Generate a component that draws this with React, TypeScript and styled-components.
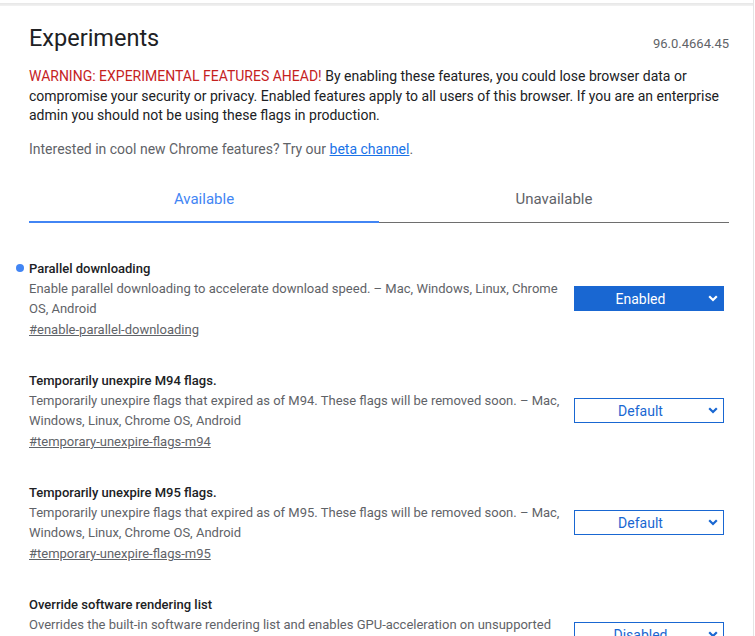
import styled, { createGlobalStyle } from "styled-components";

const GlobalStyle = createGlobalStyle`
  body {
    margin: 0;
    background: #fff;
    font-family: Roboto, "Liberation Sans", Arial, sans-serif;
    color: #202124;
  }
`;

const Page = styled.div`
  width: 754px;
  min-height: 636px;
  border-right: 1px solid #e4e4e4;
  box-sizing: border-box;
  overflow: hidden;
`;

const TopShadow = styled.div`
  height: 6px;
  background: linear-gradient(to bottom, #fff 0 3px, #e6e6e6 3px, #f2f2f2 6px);
`;

const Main = styled.div`
  padding: 0 24px 0 29px;
`;

const Header = styled.div`
  display: flex;
  justify-content: space-between;
  align-items: baseline;
  margin-top: 16px;
`;

const Title = styled.h1`
  margin: 0;
  font-size: 23.5px;
  font-weight: 400;
  line-height: 32px;
  color: #202124;
`;

const Version = styled.span`
  font-size: 13px;
  color: #5f6368;
  position: relative;
  top: 2px;
`;

const Warning = styled.p`
  margin: 13px 0 0;
  font-size: 14px;
  line-height: 19.6px;
  color: #202124;
`;

const Red = styled.span`
  color: #c5221f;
`;

const Hint = styled.p`
  margin: 14px 0 0;
  font-size: 14px;
  line-height: 19.6px;
  color: #5f6368;
`;

const Link = styled.a`
  color: #1a73e8;
  text-decoration: underline;
`;

const Tabs = styled.div`
  display: grid;
  grid-template-columns: 1fr 1fr;
  margin-top: 17px;
`;

const Tab = styled.div<{ $active?: boolean }>`
  text-align: center;
  font-size: 15px;
  line-height: 20px;
  padding: 13px 0 ${(p) => (p.$active ? "12px" : "13px")};
  color: ${(p) => (p.$active ? "#4285f4" : "#5f6368")};
  border-bottom: ${(p) => (p.$active ? "2px solid #4285f4" : "1px solid #6e6e6e")};
`;

const List = styled.div`
  padding-top: 35px;
  display: flex;
  flex-direction: column;
  gap: 31px;
`;

const Experiment = styled.div`
  display: flex;
  align-items: center;
  gap: 10px;
  padding-right: 5px;
`;

const Info = styled.div`
  width: 535px;
  position: relative;
`;

const Dot = styled.span`
  position: absolute;
  left: -13px;
  top: 6px;
  width: 8px;
  height: 8px;
  border-radius: 50%;
  background: #4285f4;
`;

const Name = styled.div`
  font-size: 13px;
  font-weight: 500;
  line-height: 21px;
  color: #202124;
`;

const Desc = styled.div`
  font-size: 13px;
  line-height: 19.5px;
  color: #5f6368;
`;

const Permalink = styled.a`
  display: block;
  margin-top: 1.5px;
  font-size: 13px;
  line-height: 19.5px;
  color: #5f6368;
  text-decoration: underline;
`;

const Dropdown = styled.div<{ $on?: boolean }>`
  width: 150px;
  height: 25px;
  box-sizing: border-box;
  display: flex;
  align-items: center;
  font-size: 14px;
  border: 1px solid #1967d2;
  background: ${(p) => (p.$on ? "#1967d2" : "#fff")};
  color: ${(p) => (p.$on ? "#fff" : "#1967d2")};
`;

const DropLabel = styled.span`
  flex: 1;
  text-align: center;
`;

const Chevron = styled.svg`
  width: 10px;
  height: 7px;
  margin: 0 5px 0 2px;
`;

type Flag = {
  name: string;
  desc: string;
  link: string;
  value: string;
  on?: boolean;
};

const flags: Flag[] = [
  {
    name: "Parallel downloading",
    desc: "Enable parallel downloading to accelerate download speed. – Mac, Windows, Linux, Chrome OS, Android",
    link: "#enable-parallel-downloading",
    value: "Enabled",
    on: true,
  },
  {
    name: "Temporarily unexpire M94 flags.",
    desc: "Temporarily unexpire flags that expired as of M94. These flags will be removed soon. – Mac, Windows, Linux, Chrome OS, Android",
    link: "#temporary-unexpire-flags-m94",
    value: "Default",
  },
  {
    name: "Temporarily unexpire M95 flags.",
    desc: "Temporarily unexpire flags that expired as of M95. These flags will be removed soon. – Mac, Windows, Linux, Chrome OS, Android",
    link: "#temporary-unexpire-flags-m95",
    value: "Default",
  },
  {
    name: "Override software rendering list",
    desc: "Overrides the built-in software rendering list and enables GPU-acceleration on unsupported system configurations. – Mac, Windows, Linux, Chrome OS, Android",
    link: "#ignore-gpu-blocklist",
    value: "Disabled",
  },
];

export default function App() {
  return (
    <Page>
      <GlobalStyle />
      <TopShadow />
      <Main>
        <Header>
          <Title>Experiments</Title>
          <Version>96.0.4664.45</Version>
        </Header>
        <Warning>
          <Red>WARNING: EXPERIMENTAL FEATURES AHEAD!</Red> By enabling these features, you could lose
          browser data or compromise your security or privacy. Enabled features apply to all users of
          this browser. If you are an enterprise admin you should not be using these flags in
          production.
        </Warning>
        <Hint>
          Interested in cool new Chrome features? Try our <Link href="#">beta channel</Link>.
        </Hint>
        <Tabs>
          <Tab $active>Available</Tab>
          <Tab>Unavailable</Tab>
        </Tabs>
        <List>
          {flags.map((f) => (
            <Experiment key={f.link}>
              <Info>
                {f.on && <Dot />}
                <Name>{f.name}</Name>
                <Desc>{f.desc}</Desc>
                <Permalink href={f.link}>{f.link}</Permalink>
              </Info>
              <Dropdown $on={f.on}>
                <DropLabel>{f.value}</DropLabel>
                <Chevron viewBox="0 0 10 7">
                  <polyline
                    points="1.2,1.2 5,5 8.8,1.2"
                    fill="none"
                    stroke="currentColor"
                    strokeWidth="2.2"
                  />
                </Chevron>
              </Dropdown>
            </Experiment>
          ))}
        </List>
      </Main>
    </Page>
  );
}
